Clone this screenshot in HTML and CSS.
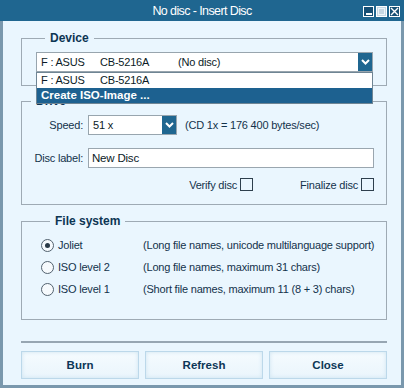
FILE: index.html
```html
<!DOCTYPE html>
<html lang="en">
<head>
  <meta charset="UTF-8">
  <title>No disc - Insert Disc</title>
  <link rel="stylesheet" href="styles.css">
</head>
<body>

  <div class="window">
    <div class="titlebar">
      <span></span>
      <span class="title">No disc - Insert Disc</span>
      <div class="winbtns">
        <span class="wbtn min"></span>
        <span class="wbtn max"></span>
        <span class="wbtn close">
          <svg width="9" height="9" viewBox="0 0 9 9"><path d="M1 1L8 8M8 1L1 8" stroke="#fff" stroke-width="1.4"/></svg>
        </span>
      </div>
    </div>

    <div class="client">

      <fieldset class="group device">
        <legend>Device</legend>
        <div class="combo wide">
          <div class="combo-text">
            <span class="col-drive">F : ASUS</span><span class="col-model">CB-5216A</span><span>(No disc)</span>
          </div>
          <span class="arrow">
            <svg width="9" height="6" viewBox="0 0 9 6"><path d="M1 1L4.5 4.5L8 1" fill="none" stroke="#fff" stroke-width="2"/></svg>
          </span>
          <ul class="droplist">
            <li><span class="col-drive">F : ASUS</span><span class="col-model">CB-5216A</span></li>
            <li class="selected">Create ISO-Image ...</li>
          </ul>
        </div>
      </fieldset>

      <fieldset class="group drive">
        <legend>Drive</legend>
        <div class="row">
          <label class="lbl">Speed:</label>
          <div class="combo speed">
            <div class="combo-text">51 x</div>
            <span class="arrow">
              <svg width="9" height="6" viewBox="0 0 9 6"><path d="M1 1L4.5 4.5L8 1" fill="none" stroke="#fff" stroke-width="2"/></svg>
            </span>
          </div>
          <span class="hint">(CD 1x = 176 400 bytes/sec)</span>
        </div>
        <div class="row label-row">
          <label class="lbl">Disc label:</label>
          <input class="textbox" type="text" value="New Disc">
        </div>
        <div class="checks">
          <label class="check">Verify disc <span class="box"></span></label>
          <label class="check finalize">Finalize disc <span class="box"></span></label>
        </div>
      </fieldset>

      <fieldset class="group filesys">
        <legend>File system</legend>
        <div class="radio-row">
          <span class="radio checked"></span>
          <span class="rname">Joliet</span>
          <span class="rdesc">(Long file names, unicode multilanguage support)</span>
        </div>
        <div class="radio-row">
          <span class="radio"></span>
          <span class="rname">ISO level 2</span>
          <span class="rdesc">(Long file names, maximum 31 chars)</span>
        </div>
        <div class="radio-row">
          <span class="radio"></span>
          <span class="rname">ISO level 1</span>
          <span class="rdesc">(Short file names, maximum 11 (8 + 3) chars)</span>
        </div>
      </fieldset>

      <div class="separator"></div>

      <div class="buttons">
        <button class="btn">Burn</button>
        <button class="btn">Refresh</button>
        <button class="btn">Close</button>
      </div>

    </div>
  </div>

</body>
</html>
```

FILE: styles.css
```css
body {
  margin: 0;
  font-family: "Liberation Sans", Arial, sans-serif;
  font-size: 11px;
  letter-spacing: -0.2px;
  color: #13324b;
}
.window {
  width: 404px;
  height: 388px;
  background: #7a98ad;
  display: flex;
  flex-direction: column;
}
.titlebar {
  height: 21px;
  background: #1f6690;
  display: grid;
  grid-template-columns: 1fr auto 1fr;
  align-items: center;
}
.title {
  color: #fff;
  font-size: 12.5px;
  letter-spacing: -0.6px;
}
.winbtns {
  display: flex;
  justify-content: flex-end;
  gap: 2px;
  padding-right: 4px;
  padding-top: 2px;
}
.wbtn {
  width: 11px;
  height: 11px;
  border: 1px solid #fff;
  background: #174f74;
  box-sizing: border-box;
  display: flex;
  align-items: center;
  justify-content: center;
}
.wbtn.min {
  align-items: flex-end;
}
.wbtn.min::after {
  content: "";
  width: 6px;
  height: 2px;
  background: #fff;
  margin-bottom: 1px;
}
.wbtn.max {
  background: #c6d7e3;
}
.wbtn.max::after {
  content: "";
  width: 5px;
  height: 5px;
  border: 1px solid #eef5fa;
}
.client {
  flex: 1;
  margin: 0 3px 3px;
  background: #eaf6fe;
  padding-top: 9px;
}

/* group boxes */
.group {
  margin: 0 14px 0 18px;
  padding: 0;
  border: 1px solid #9eaab4;
  min-width: 0;
}
.group legend {
  margin-left: 9px;
  padding: 0 5px;
  font-weight: bold;
  font-size: 12px;
  letter-spacing: 0;
  line-height: 16px;
  color: #0d3553;
}
.device {
  padding: 6px 0 13px 14px;
}
.drive {
  margin-top: 7px;
  padding: 6px 12px 13px 0;
}
.filesys {
  margin-top: 8px;
  padding: 5px 0 19px 19px;
}

/* combo boxes */
.combo {
  position: relative;
  height: 20px;
  box-sizing: border-box;
  border: 1px solid #98a5ae;
  background: #fff;
  display: flex;
  align-items: center;
  color: #0b1a26;
}
.combo.wide {
  width: 337px;
}
.combo.speed {
  width: 89px;
}
.combo-text {
  flex: 1;
  padding-left: 4px;
  white-space: nowrap;
}
.col-drive {
  display: inline-block;
  width: 59px;
}
.col-model {
  display: inline-block;
  width: 78px;
}
.arrow {
  width: 14px;
  align-self: stretch;
  background: #1f6690;
  display: flex;
  align-items: center;
  justify-content: center;
}
.droplist {
  position: absolute;
  top: 19px;
  left: -1px;
  width: 337px;
  box-sizing: border-box;
  margin: 0;
  padding: 0;
  list-style: none;
  background: #fff;
  border: 1px solid #6f8594;
  z-index: 5;
}
.droplist li {
  height: 15px;
  line-height: 15px;
  padding-left: 4px;
}
.droplist li.selected {
  background: #1d6190;
  color: #fff;
  font-weight: bold;
  font-size: 11.5px;
  letter-spacing: 0;
}

/* drive rows */
.row {
  display: flex;
  align-items: center;
  height: 20px;
}
.lbl {
  width: 61px;
  text-align: right;
  margin-right: 5px;
}
.hint {
  margin-left: 8px;
}
.label-row {
  margin-top: 13px;
}
.textbox {
  flex: 1;
  height: 20px;
  box-sizing: border-box;
  border: 1px solid #9aa6af;
  padding: 0 0 0 3px;
  font: inherit;
  font-size: 11.5px;
  letter-spacing: inherit;
  color: #0b1a26;
  background: #fff;
}
.checks {
  display: flex;
  justify-content: flex-end;
  margin-top: 10px;
}
.check {
  display: flex;
  align-items: center;
  gap: 3px;
}
.finalize {
  margin-left: 47px;
}
.box {
  width: 13px;
  height: 13px;
  box-sizing: border-box;
  border: 1px solid #2e3f4d;
}

/* file system radios */
.radio-row {
  display: flex;
  align-items: center;
  height: 22px;
  white-space: nowrap;
}
.radio {
  flex: none;
  width: 13px;
  height: 13px;
  box-sizing: border-box;
  border: 1px solid #52626f;
  border-radius: 50%;
  background: #f6fafd;
  margin-right: 4px;
  display: flex;
  align-items: center;
  justify-content: center;
}
.radio.checked::after {
  content: "";
  width: 5px;
  height: 5px;
  border-radius: 50%;
  background: #2a3a47;
}
.rname {
  flex: none;
  width: 85px;
}

/* bottom */
.separator {
  margin: 21px 14px 0 18px;
  height: 2px;
  background: #97a6b2;
}
.buttons {
  display: flex;
  gap: 6px;
  margin: 8px 14px 0 18px;
}
.btn {
  flex: 1;
  height: 28px;
  border: 1px solid #bcd8ea;
  background: linear-gradient(#f5fbfe, #eaf5fc);
  box-shadow: inset 0 0 4px #cde3f1;
  font-family: "Liberation Sans", Arial, sans-serif;
  font-weight: bold;
  font-size: 11.5px;
  color: #0c3656;
  padding: 0;
}
```
